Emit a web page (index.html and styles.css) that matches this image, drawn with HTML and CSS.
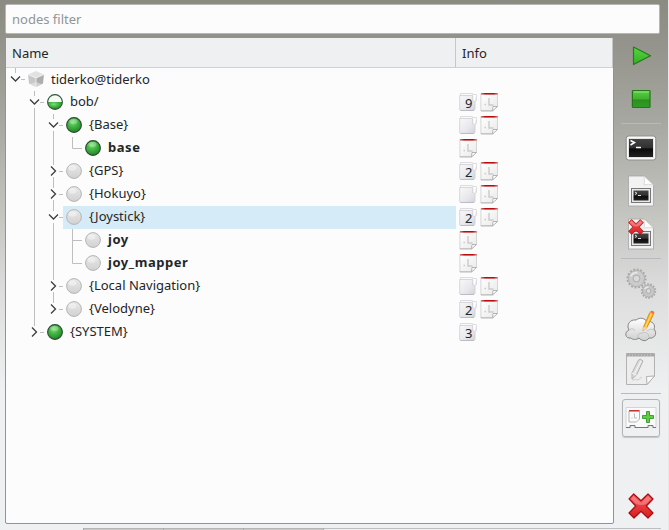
FILE: index.html
```html
<!DOCTYPE html>
<html lang="en">
<head>
<meta charset="utf-8">
<title>Nodes</title>
<link rel="stylesheet" href="styles.css">
</head>
<body>
<svg class="defs" aria-hidden="true">
  <defs>
    <radialGradient id="green" cx=".42" cy=".3" r=".7"><stop offset="0" stop-color="#7de07a"/><stop offset=".45" stop-color="#45b746"/><stop offset="1" stop-color="#218526"/></radialGradient>
    <linearGradient id="gray" x2="0" y2="1"><stop offset="0" stop-color="#e9e9e9"/><stop offset=".4" stop-color="#dfdfdf"/><stop offset="1" stop-color="#d2d2d2"/></linearGradient>
    <linearGradient id="folder" x2="1" y2="1"><stop offset="0" stop-color="#f8f8f9"/><stop offset=".6" stop-color="#e8e8ec"/><stop offset="1" stop-color="#d2d2d8"/></linearGradient>
    <linearGradient id="paper" x2="1" y2="1"><stop offset="0" stop-color="#fff"/><stop offset="1" stop-color="#e9e9e9"/></linearGradient>
    <linearGradient id="redbar"><stop offset="0" stop-color="#d77"/><stop offset=".25" stop-color="#b80d0d"/><stop offset=".75" stop-color="#b80d0d"/><stop offset="1" stop-color="#d77"/></linearGradient>
    <linearGradient id="play" x2="0" y2="1"><stop offset="0" stop-color="#55d83e"/><stop offset="1" stop-color="#35ad25"/></linearGradient>
    <linearGradient id="stop" x2="0" y2="1"><stop offset="0" stop-color="#58cf45"/><stop offset=".5" stop-color="#3fb22e"/><stop offset=".55" stop-color="#2c8f20"/><stop offset="1" stop-color="#319d25"/></linearGradient>
    <linearGradient id="screen" x2="0" y2="1"><stop offset="0" stop-color="#444"/><stop offset=".48" stop-color="#303030"/><stop offset=".55" stop-color="#0b0b0b"/><stop offset="1" stop-color="#222"/></linearGradient>
    <linearGradient id="red" x2="0" y2="1"><stop offset="0" stop-color="#f45c5c"/><stop offset="1" stop-color="#d81c20"/></linearGradient>
    <linearGradient id="cloud" x2="0" y2="1"><stop offset="0" stop-color="#fff"/><stop offset="1" stop-color="#cfcfcf"/></linearGradient>
  </defs>
  <symbol id="line" viewBox="0 0 19 23"><path class="guide" d="M9.5 0V23"/></symbol>
  <symbol id="tee" viewBox="0 0 19 23"><path class="guide" d="M9.5 0V23M9.5 11.5H19"/></symbol>
  <symbol id="ell" viewBox="0 0 19 23"><path class="guide" d="M9.5 0V11.5H19"/></symbol>
  <symbol id="open-last" viewBox="0 0 19 23"><path class="guide" d="M9.5 0V5M15 11.5H19"/><path class="arrow" d="M5 8.5L9.5 13L14 8.5"/></symbol>
  <symbol id="open" viewBox="0 0 19 23"><path class="guide" d="M9.5 0V5M9.5 17V23M15 11.5H19"/><path class="arrow" d="M5 8.5L9.5 13L14 8.5"/></symbol>
  <symbol id="shut" viewBox="0 0 19 23"><path class="guide" d="M9.5 0V5M9.5 17V23M15 11.5H19"/><path class="arrow" d="M7 6.5L11.5 11L7 15.5"/></symbol>
  <symbol id="shut-last" viewBox="0 0 19 23"><path class="guide" d="M9.5 0V5M15 11.5H19"/><path class="arrow" d="M7 6.5L11.5 11L7 15.5"/></symbol>
  <symbol id="on" viewBox="0 0 18 18"><circle cx="9" cy="9" r="7.4" fill="url(#green)" stroke="#2d4a35" stroke-width="1.1"/><ellipse cx="8.5" cy="5.5" rx="4" ry="2.5" fill="#fff" opacity=".25"/></symbol>
  <symbol id="half" viewBox="0 0 18 18"><circle cx="9" cy="9" r="7.4" fill="#f4fbf4"/><path d="M1.6 9H16.4A7.4 7.4 0 0 1 1.6 9Z" fill="url(#green)"/><circle cx="9" cy="9" r="7.4" fill="none" stroke="#33543b" stroke-width="1.1"/></symbol>
  <symbol id="off" viewBox="0 0 18 18"><circle cx="9" cy="9" r="7.4" fill="url(#gray)" stroke="#b5b5b5"/><ellipse cx="7.5" cy="6" rx="4" ry="2.8" fill="#fff" opacity=".4"/></symbol>
  <symbol id="cube" viewBox="0 0 18 18"><path d="M9 1L17 4.5L9 8L1 4.5Z" fill="#e2e2e2"/><path d="M1 4.5L9 8V17L2 13.5Z" fill="#c8c8c8"/><path d="M17 4.5L9 8V17L16 13.5Z" fill="#adadad"/><path d="M9 8V17M1 4.5L9 8L17 4.5" fill="none" stroke="#f3f3f3" stroke-width=".8"/><path d="M9 12L15 14L9 17L3 14Z" fill="#eee" opacity=".5"/></symbol>
  <symbol id="folder-icon" viewBox="0 0 19 20"><path d="M1.5 4V1.5H13.5V2.5H17.5V8L15.5 10.5" fill="#fafafb" stroke="#dcdce0"/><path d="M.7 3.5H13.5V9L16 9.5V17Q16 18.4 14.5 18.4H1.8Q.6 18.4.7 17Z" fill="url(#folder)" stroke="#d2d2d9" stroke-width=".9"/><path d="M14 3.5V8L15 9.5L16.5 8.5L17.5 3" fill="#fff" stroke="#dcdce0" stroke-width=".7"/><path d="M1.5 18.5H15" stroke="#bcbcc4"/></symbol>
  <symbol id="launch" viewBox="0 0 19 20"><path d="M.9 1.5H17.5V14L12.5 19H.9Z" fill="url(#paper)" stroke="#cdcdcd" stroke-width=".8"/><rect x="1" y="1" width="16.8" height="1.6" fill="url(#redbar)"/><path d="M12.5 19L13 14.5L17.5 14.5Z" fill="#fff" stroke="#aaa" stroke-width=".9"/><path d="M9 6V13H13.5M4.5 12.5H6" fill="none" stroke="#cbcbcb" stroke-width="1.4"/><path d="M.9 18.8H12.5" stroke="#b9b9b9"/></symbol>
  <symbol id="term" viewBox="0 0 32 26"><rect x="1.2" y="1" width="29.6" height="24" rx="2.5" fill="#e4e4e4" stroke="#8d8d8d"/><rect x="2.5" y="2.3" width="27" height="21.4" rx="1.5" fill="none" stroke="#fff"/><rect x="4" y="4" width="24" height="18" fill="url(#screen)"/><path d="M5.5 5.5L9.5 7.5L5.5 10M11 12.4H16" fill="none" stroke="#fff" stroke-width="1.5"/></symbol>
  <symbol id="termdoc" viewBox="0 0 32 32"><path d="M3.5 1H19L28.5 10V31H3.5Z" fill="#f2f2f2" stroke="#a5a5a5" stroke-width=".8"/><path d="M19 1Q20 8 19 10Q23 8.5 28.5 10Z" fill="#fff" stroke="#c6c6c6" stroke-width=".6"/><rect x="6.5" y="13.5" width="19" height="14" fill="#e8e8e8" stroke="#777"/><rect x="8.5" y="15.5" width="15" height="10" fill="url(#screen)"/><path d="M10 17L12 18.3L10 19.5M13 20.5H16" fill="none" stroke="#ddd"/></symbol>
  <symbol id="cross" viewBox="0 0 26 26"><path d="M5.7 1L13 7.7L20 1L25 6L18.3 13L25 20L20 25L13 18.3L6 25L1 20L7.7 13L1 5.8Z" fill="url(#red)" stroke="#a80c12" stroke-width="1.2" stroke-linejoin="round"/><path d="M5.7 3L13 9.8L20 3L23 6L18.5 10.8Q13 13.5 7.5 10.5L3 5.8Z" fill="#fff" opacity=".25"/></symbol>
</svg>

<main class="window">
  <input class="filter" type="text" placeholder="nodes filter">
  <div class="body">
    <section class="tree">
      <header class="row head"><div class="name">Name</div><div class="info">Info</div></header>
      <div class="row"><div class="name"><svg class="g"><use href="#open-last"/></svg><span class="item host"><svg class="node"><use href="#cube"/></svg>tiderko@tiderko</span></div></div>
      <div class="row"><div class="name"><i class="g"></i><svg class="g"><use href="#open"/></svg><span class="item"><svg class="node"><use href="#half"/></svg>bob/</span></div><div class="info"><span class="folder"><svg><use href="#folder-icon"/></svg><b>9</b></span><svg class="launch"><use href="#launch"/></svg></div></div>
      <div class="row"><div class="name"><i class="g"></i><svg class="g"><use href="#line"/></svg><svg class="g"><use href="#open"/></svg><span class="item"><svg class="node"><use href="#on"/></svg>{Base}</span></div><div class="info"><span class="folder"><svg><use href="#folder-icon"/></svg></span><svg class="launch"><use href="#launch"/></svg></div></div>
      <div class="row"><div class="name"><i class="g"></i><svg class="g"><use href="#line"/></svg><svg class="g"><use href="#line"/></svg><svg class="g"><use href="#ell"/></svg><span class="item leaf"><svg class="node"><use href="#on"/></svg>base</span></div><div class="info"><svg class="launch"><use href="#launch"/></svg></div></div>
      <div class="row"><div class="name"><i class="g"></i><svg class="g"><use href="#line"/></svg><svg class="g"><use href="#shut"/></svg><span class="item"><svg class="node"><use href="#off"/></svg>{GPS}</span></div><div class="info"><span class="folder"><svg><use href="#folder-icon"/></svg><b>2</b></span><svg class="launch"><use href="#launch"/></svg></div></div>
      <div class="row"><div class="name"><i class="g"></i><svg class="g"><use href="#line"/></svg><svg class="g"><use href="#shut"/></svg><span class="item"><svg class="node"><use href="#off"/></svg>{Hokuyo}</span></div><div class="info"><span class="folder"><svg><use href="#folder-icon"/></svg></span><svg class="launch"><use href="#launch"/></svg></div></div>
      <div class="row"><div class="name"><i class="g"></i><svg class="g"><use href="#line"/></svg><svg class="g"><use href="#open"/></svg><span class="item selected"><svg class="node"><use href="#off"/></svg>{Joystick}</span></div><div class="info"><span class="folder"><svg><use href="#folder-icon"/></svg><b>2</b></span><svg class="launch"><use href="#launch"/></svg></div></div>
      <div class="row"><div class="name"><i class="g"></i><svg class="g"><use href="#line"/></svg><svg class="g"><use href="#line"/></svg><svg class="g"><use href="#tee"/></svg><span class="item leaf"><svg class="node"><use href="#off"/></svg>joy</span></div><div class="info"><svg class="launch"><use href="#launch"/></svg></div></div>
      <div class="row"><div class="name"><i class="g"></i><svg class="g"><use href="#line"/></svg><svg class="g"><use href="#line"/></svg><svg class="g"><use href="#ell"/></svg><span class="item leaf"><svg class="node"><use href="#off"/></svg>joy_mapper</span></div><div class="info"><svg class="launch"><use href="#launch"/></svg></div></div>
      <div class="row"><div class="name"><i class="g"></i><svg class="g"><use href="#line"/></svg><svg class="g"><use href="#shut"/></svg><span class="item"><svg class="node"><use href="#off"/></svg>{Local Navigation}</span></div><div class="info"><span class="folder"><svg><use href="#folder-icon"/></svg></span><svg class="launch"><use href="#launch"/></svg></div></div>
      <div class="row"><div class="name"><i class="g"></i><svg class="g"><use href="#line"/></svg><svg class="g"><use href="#shut-last"/></svg><span class="item"><svg class="node"><use href="#off"/></svg>{Velodyne}</span></div><div class="info"><span class="folder"><svg><use href="#folder-icon"/></svg><b>2</b></span><svg class="launch"><use href="#launch"/></svg></div></div>
      <div class="row"><div class="name"><i class="g"></i><svg class="g"><use href="#shut-last"/></svg><span class="item"><svg class="node"><use href="#on"/></svg>{SYSTEM}</span></div><div class="info"><span class="folder"><svg><use href="#folder-icon"/></svg><b>3</b></span></div></div>
    </section>

    <nav class="tools">
      <div class="tool"><svg width="32" height="32" viewBox="0 0 32 32"><path d="M8.5 7L25.5 15.7L8.5 24.5Z" fill="url(#play)" stroke="#28791d" stroke-width="1.2" stroke-linejoin="round"/></svg></div>
      <div class="tool"><svg width="32" height="32" viewBox="0 0 32 32"><rect x="7.4" y="7.5" width="17.6" height="17" rx=".8" fill="url(#stop)" stroke="#247619" stroke-width="1.2"/><path d="M9 9H24" stroke="#8be37d"/></svg></div>
      <hr>
      <div class="tool"><svg width="32" height="26"><use href="#term"/></svg></div>
      <div class="tool"><svg width="32" height="32"><use href="#termdoc"/></svg></div>
      <div class="tool"><svg width="32" height="32" viewBox="0 0 32 32"><use href="#termdoc" width="32" height="32"/><use href="#cross" x="3" y="1" width="16" height="16"/></svg></div>
      <hr>
      <div class="tool"><svg width="32" height="32" viewBox="0 0 32 32"><g fill="none" stroke="#a8a8a8"><circle cx="11.5" cy="11.5" r="9.1" stroke-width="1.8" stroke-dasharray="1.9 1.67"/><circle cx="11.5" cy="11.5" r="5.8" stroke="#cbcbcb" stroke-width="5"/><circle cx="11.5" cy="11.5" r="8.1" stroke-width=".8"/><circle cx="11.5" cy="11.5" r="3.4" stroke-width=".9"/><circle cx="23.5" cy="24" r="6.9" stroke-width="1.6" stroke-dasharray="1.7 1.4"/><circle cx="23.5" cy="24" r="4.2" stroke="#c6c6c6" stroke-width="4"/><circle cx="23.5" cy="24" r="6" stroke-width=".8"/><circle cx="23.5" cy="24" r="2.3" stroke-width=".9"/></g><path d="M5.5 9.5Q7.5 5.5 12.5 5.5M19.5 22Q21 20 23.5 20" fill="none" stroke="#e8e8e8" stroke-width="1.5"/></svg></div>
      <div class="tool"><svg width="32" height="32" viewBox="0 0 32 32"><path d="M6 28C0 29-1 22 4 20C1 15 5 9 11 10C15 7 20 8 22 12C27 10 31 15 29 19C33 24 29 29 24 28C21 32 17 31 14 28C11 30 8 30 6 28Z" fill="url(#cloud)" stroke="#858585"/><path d="M4 20Q8 17 10 21M13 28Q12 23 17 23Q23 21 24 27M29 20Q25 18 22 21" fill="none" stroke="#bbb" stroke-width=".8"/><path d="M18.5 17L24.5 3Q26 0 29 2L28 5.5L22 17.5L18 21Z" fill="#fba91b" stroke="#d68208" stroke-width=".7"/><path d="M20.5 17L26.5 3.5" stroke="#ffda70" stroke-width="1.5"/><path d="M25.4 1.8L26.5.7L29 2L28.6 4Z" fill="#ef6b58"/><path d="M18.5 17L22 17.5L18 21Z" fill="#f6dfb8"/></svg></div>
      <div class="tool"><svg width="32" height="34" viewBox="0 0 32 34"><path d="M1.5 1.5H29.5V24L22 32.5H1.5Z" fill="#ededed" stroke="#b2b2b2"/><path d="M1.5 3H29.5" stroke="#a8a8a8" stroke-width="3"/><path d="M4 3H27" stroke="#ccc" stroke-dasharray="1 2"/><path d="M22 32.5L21.5 24.5L29.5 24Z" fill="#fafafa" stroke="#b2b2b2"/><path d="M7 21L13.5 8Q15.5 6 18 9L11.5 23L7 27Z" fill="#ddd" stroke="#b2b2b2"/><path d="M7 21L11.5 23M10 21L16 9" stroke="#f8f8f8"/><path d="M7 28Q11 27 13 28L17 25" fill="none" stroke="#d0d0d0"/></svg></div>
      <hr>
      <div class="tool framed"><svg width="32" height="24" viewBox="0 0 32 24"><path d="M1 1.5H31V21.5H27V19.5H24V21.5H9V19.5H6V21.5H1Z" fill="#fafafa" stroke="#d4d4d4"/><path d="M1 21.5H5V19.5H10V21.5H23V19.5H28V21.5H31" fill="none" stroke="#777"/><path d="M4 5H14.5V13L11.5 16H4Z" fill="#fafafa" stroke="#b5b5b5"/><path d="M4 4.7H14.5" stroke="#c43434" stroke-width="1.4"/><path d="M9.5 7.5V12H12M6.5 12H7.5" fill="none" stroke="#bbb"/><path d="M21.5 5.5H24.5V9.5H28.5V12.5H24.5V16.5H21.5V12.5H17.5V9.5H21.5Z" fill="#62cc45" stroke="#36972b" stroke-width=".9"/></svg></div>
      <div class="tool last"><svg width="26" height="26"><use href="#cross"/></svg></div>
    </nav>
  </div>
  <footer class="tabs"><i class="active"></i><i></i><i></i><i></i><span></span></footer>
</main>
</body>
</html>
```
FILE: styles.css
```css
* { box-sizing: border-box; }
body {
  margin: 0;
  height: 530px;
  overflow: hidden;
  font: 13px/18px "Noto Sans", sans-serif;
  color: #232629;
  background: linear-gradient(#8b8b82 0, #95958d 50px, #a6a7a0 120px, #c1c2bd 205px, #dcdddc 290px, #eff0f1 390px);
}
svg { display: block; flex: none; }
.defs { position: absolute; width: 0; height: 0; }
.guide { fill: none; stroke: #bcbebf; }
.arrow { fill: none; stroke: #3b3e41; stroke-width: 1.3; }
.window {
  display: flex;
  flex-direction: column;
  height: 530px;
  padding: 4px 0 0 5px;
  border-right: 1px solid #e8e8e8;
}
.filter {
  width: 655px;
  height: 30px;
  padding: 0 6px 1px;
  border: 1px solid #b5b7b8;
  border-radius: 2px;
  background: #fcfcfc;
  font: inherit;
}
.filter::placeholder { color: #929496; opacity: 1; }
.body { display: flex; height: 494px; padding-top: 3px; }
.tree {
  width: 609px;
  height: 487px;
  border: 1px solid #3daee9;
  border-radius: 2px;
  background: #fcfcfc;
}
.row { display: flex; height: 23px; }
.name { display: flex; width: 450px; }
.info { display: flex; flex: 1; align-items: flex-start; gap: 2px; padding: 1px 0 0 3px; }
.head { height: 30px; background: #eff0f1; border-bottom: 1px solid #cfd1d3; }
.head .name { align-items: center; padding-left: 6px; border-right: 1px solid #c4c6c8; }
.head .info { align-items: center; padding: 0 0 0 6px; border-right: 1px solid #c4c6c8; }
.g { width: 19px; height: 23px; flex: none; }
.item { display: flex; flex: 1; align-items: center; padding-bottom: 3px; white-space: nowrap; }
.node { width: 18px; height: 18px; margin: 2px 6px 0 2px; }
.host { padding-bottom: 1px; }
.host .node { margin-top: 0; }
.leaf { font-weight: bold; letter-spacing: .55px; }
.selected { background: #d6ebf8; }
.folder { display: grid; width: 19px; height: 20px; }
.folder > * { grid-area: 1 / 1; }
.folder svg, .launch { width: 19px; height: 20px; }
.folder b { padding: 2px 0 0 6px; font-weight: normal; z-index: 1; }
.tools { width: 54px; display: flex; flex-direction: column; align-items: center; gap: 5px; }
.tool { display: flex; align-items: center; justify-content: center; width: 38px; height: 38px; flex: none; }
.tools hr { width: 40px; height: 1px; margin: 0; border: 0; background: #b9babb; flex: none; }
.framed { border: 1px solid #b1b3b4; border-radius: 3px; box-shadow: 0 1px 1px #c5c6c7; }
.last { margin-top: 45px; }
.tabs { display: flex; height: 2px; flex: none; }
.tabs i { width: 80px; height: 2px; border-top: 1px solid #b5b5b5; border-right: 1px solid #aaa; background: #c9c9c9; }
.tabs .active { width: 79px; border-top: 0; background: transparent; }
.tabs span { flex: 1; border-top: 1px solid #bcbebf; margin-right: 7px; }
```
